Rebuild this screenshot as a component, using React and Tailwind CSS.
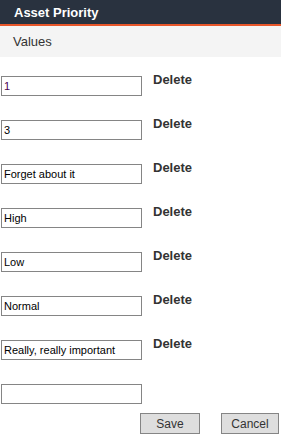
import React from "react";

const values = ["1", "3", "Forget about it", "High", "Low", "Normal", "Really, really important"];

export default function App() {
  return (
    <div className="w-[281px] h-[436px] bg-white overflow-hidden" style={{ fontFamily: '"Liberation Sans", Arial, sans-serif' }}>
      <div className="h-[24px] bg-[#29323f] flex items-center pl-[14px]">
        <span className="text-white font-bold text-[13px] leading-none">Asset Priority</span>
      </div>
      <div className="h-[2px] bg-[#e8562a]" />
      <div className="h-[31px] bg-[#f4f4f4] flex items-center pl-[13px]">
        <span className="text-[13px] text-[#333] leading-none">Values</span>
      </div>
      <div className="flex flex-col gap-[18px] pt-[13px]">
        {values.map((v, i) => (
          <div key={i} className="flex items-start h-[26px]">
            <input
              readOnly
              value={v}
              className={`mt-[6px] ml-[1px] w-[141px] h-[20px] border border-[#858585] px-[2px] text-[11px] outline-none ${i === 0 ? "text-[#4b0050]" : "text-black"}`}
            />
            <span className="ml-[11px] mt-[2px] text-[13px] font-bold text-[#333] leading-[15px]">Delete</span>
          </div>
        ))}
        <div className="flex items-start h-[26px]">
          <input readOnly value="" className="mt-[6px] ml-[1px] w-[141px] h-[20px] border border-[#858585] px-[2px] text-[11px] outline-none" />
        </div>
      </div>
      <div className="flex justify-end gap-[21px] pr-[2px] mt-[9px]">
        <button className="w-[60px] h-[21px] bg-[#dedede] border border-[#858585] text-[12px] text-[#333] leading-none">Save</button>
        <button className="w-[58px] h-[21px] bg-[#dedede] border border-[#858585] text-[12px] text-[#333] leading-none">Cancel</button>
      </div>
    </div>
  );
}
